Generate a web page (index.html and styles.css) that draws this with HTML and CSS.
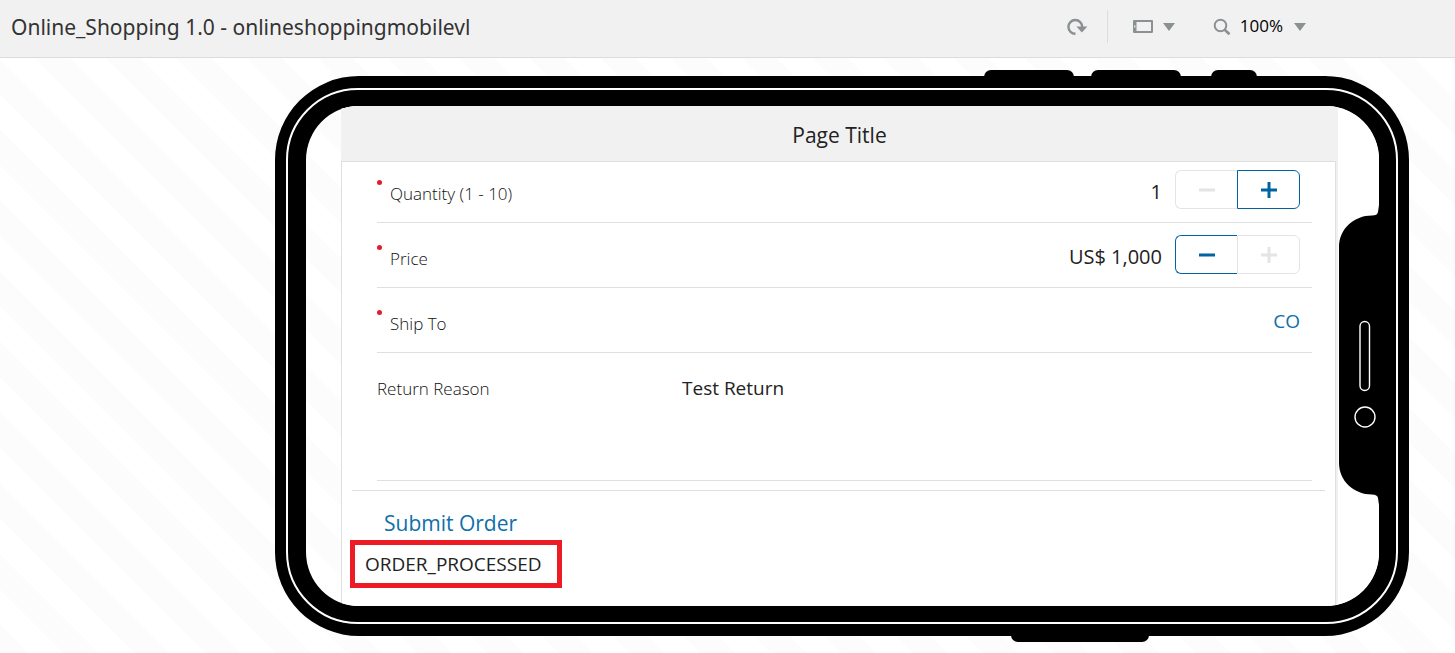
FILE: index.html
```html
<!DOCTYPE html>
<html lang="en">
<head>
<meta charset="utf-8">
<title>Online_Shopping 1.0 - onlineshoppingmobilevl</title>
<link rel="stylesheet" href="styles.css">
</head>
<body>
<header class="toolbar">
  <h1 class="app-name">Online_Shopping 1.0 - onlineshoppingmobilevl</h1>
  <div class="tools">
    <button class="tool" type="button" aria-label="Reload">
      <svg width="22" height="18" viewBox="0 0 22 18"><path d="M9.500 15.800A6.900 6.900 0 1 1 16.200 9" fill="none" stroke="#8b9092" stroke-width="2.4"/><path d="M10.400 8.600h11l-5.500 6z" fill="#8b9092"/></svg>
    </button>
    <span class="separator"></span>
    <button class="tool device" type="button" aria-label="Device orientation">
      <svg width="20" height="13" viewBox="0 0 20 13"><path fill="#8b9092" fill-rule="evenodd" d="M1 0h18a1 1 0 0 1 1 1v11a1 1 0 0 1-1 1H1a1 1 0 0 1-1-1V1a1 1 0 0 1 1-1zM3.500 2v9h14.500v-9zM1.200 5.500v2h1.200v-2z"/></svg>
      <svg width="12" height="8" viewBox="0 0 12 8"><path d="M0 0h12L6 8z" fill="#8b9092"/></svg>
    </button>
    <button class="tool zoom" type="button">
      <svg width="18" height="18" viewBox="0 0 18 18"><circle cx="7.500" cy="7.500" r="5.800" fill="none" stroke="#8b9092" stroke-width="2"/><path d="M11.700 11.700l4.800 4.500" stroke="#8b9092" stroke-width="2.600"/></svg>
      <span class="zoom-value">100%</span>
      <svg width="12" height="8" viewBox="0 0 12 8"><path d="M0 0h12L6 8z" fill="#8b9092"/></svg>
    </button>
  </div>
</header>
<main class="canvas">
  <div class="phone">
    <span class="side-key key-down"></span>
    <span class="side-key key-up"></span>
    <span class="side-key key-mute"></span>
    <span class="side-key key-power"></span>
    <div class="viewport">
      <section class="screen">
        <h2 class="page-title">Page Title</h2>
        <div class="page">
          <form class="form">
            <div class="row">
              <label class="label required" for="quantity">Quantity (1 - 10)</label>
              <input class="value" id="quantity" type="text" value="1">
              <div class="stepper">
                <button class="step" type="button" disabled aria-label="Decrease quantity"><svg width="16" height="16" viewBox="0 0 16 16"><path d="M0 8h16"/></svg></button>
                <button class="step" type="button" aria-label="Increase quantity"><svg width="16" height="16" viewBox="0 0 16 16"><path d="M0 8h16M8 0v16"/></svg></button>
              </div>
            </div>
            <div class="row">
              <label class="label required" for="price">Price</label>
              <input class="value" id="price" type="text" value="US$ 1,000">
              <div class="stepper">
                <button class="step" type="button" aria-label="Decrease price"><svg width="16" height="16" viewBox="0 0 16 16"><path d="M0 8h16"/></svg></button>
                <button class="step" type="button" disabled aria-label="Increase price"><svg width="16" height="16" viewBox="0 0 16 16"><path d="M0 8h16M8 0v16"/></svg></button>
              </div>
            </div>
            <div class="row">
              <label class="label required" for="ship">Ship To</label>
              <button class="pick" id="ship" type="button">CO</button>
            </div>
            <div class="row row-tall">
              <label class="label" for="reason">Return Reason</label>
              <textarea class="reason" id="reason">Test Return</textarea>
            </div>
          </form>
          <div class="footer">
            <button class="submit" type="button">Submit Order</button>
            <output class="status">ORDER_PROCESSED</output>
          </div>
        </div>
      </section>
    </div>
    <svg class="notch" width="42" height="300" viewBox="0 0 42 300">
      <path d="M42 0H40L39 7Q38.500 10.500 33 10.500C15 10.500 0 24 0 42V258C0 276 15 289.500 33 289.500Q38.500 289.500 39 293L40 300H42z" fill="#000"/>
      <rect x="21" y="116.500" width="9.500" height="69" rx="4.700" fill="none" stroke="#fff" stroke-width="1.400"/>
      <circle cx="26" cy="212" r="10" fill="none" stroke="#fff" stroke-width="1.400"/>
    </svg>
  </div>
</main>
</body>
</html>
```
FILE: styles.css
```css
* { box-sizing: border-box; }

body {
  margin: 0;
  min-height: 100vh;
  display: flex;
  flex-direction: column;
  font-family: "Open Sans", "Noto Sans", sans-serif;
  color: #222;
  background: #fff;
}

button, input, textarea {
  font: inherit;
  color: inherit;
  margin: 0;
  padding: 0;
  border: 0;
  background: none;
}

svg { display: block; }

.toolbar {
  display: flex;
  align-items: center;
  justify-content: space-between;
  height: 58px;
  padding: 0 149px 4px 11px;
  background: #f1f1f1;
  border-bottom: 1px solid #dcdcdc;
}

.app-name {
  margin: 0;
  font-family: "Noto Sans", "Open Sans", sans-serif;
  font-size: 21px;
  font-weight: 400;
  line-height: 28px;
  color: #333;
}

.tools { display: flex; align-items: center; }
.tool { display: flex; align-items: center; }
.separator { width: 1px; height: 33px; margin: 0 25px 0 19px; background: #dcdcdc; }
.device { gap: 10px; margin-right: 38px; }
.zoom { color: #000; font-size: 17px; }
.zoom-value { margin: 0 11px 0 9px; padding-bottom: 2px; }

.canvas {
  flex: 1;
  padding: 18px 46px 17px 275px;
  background: repeating-linear-gradient(45deg, #fcfcfc 0 20px, #fff 20px 45px, #fcfcfc 45px 50px);
}

.phone {
  position: relative;
  height: 560px;
  border: 30px solid #000;
  border-left-width: 31px;
  border-radius: 84px;
}

.phone::after {
  content: "";
  position: absolute;
  inset: -18px -19px -18px -20px;
  border: 2px solid #fff;
  border-radius: 72px;
  pointer-events: none;
}

.side-key { position: absolute; height: 7px; background: #000; }
.key-down, .key-up, .key-mute { top: -36px; border-radius: 9px 9px 0 0; }
.key-down { right: 305px; width: 90px; }
.key-up { right: 198px; width: 90px; }
.key-mute { right: 122px; width: 46px; }
.key-power { bottom: -36px; right: 230px; width: 138px; border-radius: 0 0 9px 9px; }

.viewport {
  height: 100%;
  overflow: hidden;
  border-radius: 53px;
  padding: 0 0 0 35px;
}

.screen {
  height: 100%;
  display: flex;
  flex-direction: column;
  padding-right: 41px;
  background: #fff;
}

.page-title {
  margin: 0;
  height: 55px;
  display: flex;
  align-items: center;
  justify-content: center;
  padding-top: 3px;
  font-size: 21px;
  font-weight: 400;
  background: #f1f1f1;
}

.page {
  flex: 1;
  padding: 0 10px;
  margin-right: 2px;
  border: solid #dfdfdf;
  border-width: 1px 1px 0;
  box-shadow: 2px 0 #f0f0f0;
}

.form { padding: 0 13px 0 25px; }

.row {
  display: flex;
  align-items: center;
  padding: 12px 12px 13px 0;
  border-bottom: 1px solid #dfdfdf;
}

.row:first-child { padding-top: 8px; }

.label {
  position: relative;
  flex: 1;
  padding-top: 8px;
  font-size: 17px;
  font-weight: 300;
  line-height: 24px;
  color: #111;
}

.required { padding-left: 13px; }

.required::before {
  content: "";
  position: absolute;
  left: 0;
  top: 6px;
  width: 5px;
  height: 5px;
  border-radius: 50%;
  background: #e21c2d;
}

.value {
  width: 160px;
  height: 39px;
  padding-top: 4px;
  margin-right: 13px;
  text-align: right;
  font-size: 20px;
}

.stepper { display: flex; }

.step {
  display: grid;
  place-items: center;
  width: 63px;
  height: 39px;
  border: 1px solid #0064a0;
  stroke: #0064a0;
  stroke-width: 3px;
}

.step:first-child { width: 62px; border-right: 0; border-radius: 6px 0 0 6px; }
.step:last-child { border-radius: 0 6px 6px 0; }
.step:disabled { border-color: #e4e4e4; stroke: #e4e4e4; }

.pick { height: 39px; padding-top: 2px; font-size: 19px; color: #0e6fa9; }

.row-tall { align-items: flex-start; height: 128px; padding-top: 16px; }
.row-tall .label { flex: 0 0 305px; }

.reason {
  flex: 1;
  height: 90px;
  padding-top: 6px;
  font-size: 19px;
  line-height: 26px;
  resize: none;
}

.footer {
  display: flex;
  flex-direction: column;
  align-items: flex-start;
  margin-top: 9px;
  padding-top: 16px;
  border-top: 1px solid #dfdfdf;
}

.submit { margin-left: 32px; font-size: 21px; line-height: 32px; color: #0e6fa9; }

.status {
  margin: 1px 0 0 -2px;
  padding: 4px 15px 4px 10px;
  font-size: 19px;
  line-height: 30px;
  border: 5px solid #ed1c24;
}

.notch { position: absolute; right: -2px; top: 99px; }
```
